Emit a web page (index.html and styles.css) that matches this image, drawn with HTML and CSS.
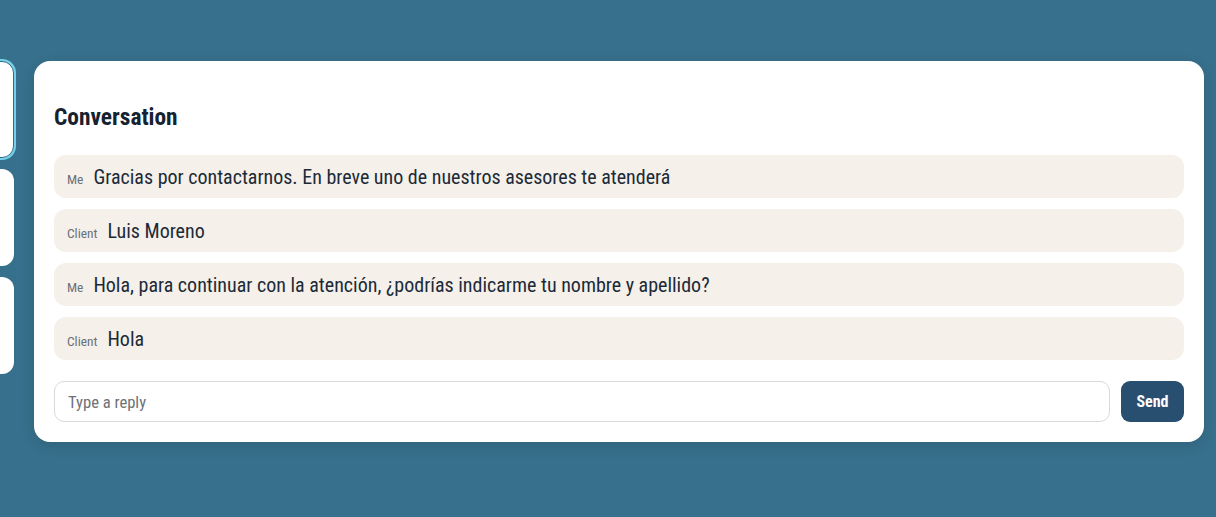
FILE: index.html
```html
<!DOCTYPE html>
<html lang="es">
<head>
<meta charset="utf-8">
<title>Conversation</title>
<link rel="stylesheet" href="styles.css">
</head>
<body>
<div class="layout">
  <aside class="sidebar">
    <div class="side-card active"></div>
    <div class="side-card"></div>
    <div class="side-card"></div>
  </aside>
  <main class="panel">
    <h2 class="title">Conversation</h2>
    <ul class="messages">
      <li class="msg"><span class="who">Me</span><span class="text">Gracias por contactarnos. En breve uno de nuestros asesores te atenderá</span></li>
      <li class="msg"><span class="who">Client</span><span class="text">Luis Moreno</span></li>
      <li class="msg"><span class="who">Me</span><span class="text">Hola, para continuar con la atención, ¿podrías indicarme tu nombre y apellido?</span></li>
      <li class="msg"><span class="who">Client</span><span class="text">Hola</span></li>
    </ul>
    <form class="reply">
      <input class="reply-input" type="text" placeholder="Type a reply">
      <button class="send" type="button">Send</button>
    </form>
  </main>
</div>
</body>
</html>
```
FILE: styles.css
```css
* { box-sizing: border-box; }
html, body { margin: 0; padding: 0; }
body {
  background: #37708c;
  font-family: "Roboto Condensed", "Roboto", "Liberation Sans", sans-serif;
  font-stretch: condensed;
  color: #1b2733;
  width: 1216px;
  height: 517px;
  overflow: hidden;
}
.layout {
  display: flex;
  align-items: flex-start;
  gap: 20px;
  padding: 61px 12px 0 0;
}
.sidebar {
  flex: 0 0 300px;
  margin-left: -286px;
  display: flex;
  flex-direction: column;
  gap: 11px;
}
.side-card {
  height: 97px;
  background: #fff;
  border-radius: 12px;
}
.side-card.active {
  border: 1px solid #2f6a86;
  box-shadow: 0 0 0 2px #74d2e8;
}
.panel {
  flex: 1;
  background: #fff;
  border-radius: 16px;
  padding: 20px;
  box-shadow: 0 4px 14px rgba(0, 0, 0, 0.12);
}
.title {
  margin: 23px 0 24px;
  font-size: 23.4px;
  font-weight: 700;
  color: #152230;
  line-height: 27px;
}
.messages {
  list-style: none;
  margin: 0 0 21px;
  padding: 0;
  display: flex;
  flex-direction: column;
  gap: 11px;
}
.msg {
  display: flex;
  align-items: baseline;
  gap: 10px;
  background: #f5f0ea;
  border-radius: 12px;
  padding: 11px 13px 9px;
  height: 43px;
}
.who {
  font-size: 13.4px;
  color: #6a7078;
}
.text {
  font-size: 20px;
  color: #1c2a38;
  line-height: 23px;
}
.reply {
  display: flex;
  gap: 11px;
  margin: 0;
}
.reply-input {
  flex: 1;
  height: 41px;
  border: 1px solid #d9d9d9;
  border-radius: 10px;
  padding: 1px 13px 0;
  font-family: inherit;
  font-stretch: condensed;
  font-size: 16.6px;
  color: #1c2a38;
  outline: none;
}
.reply-input::placeholder { color: #6d7178; }
.send {
  width: 63px;
  height: 41px;
  border: none;
  border-radius: 9px;
  background: #284f6f;
  color: #fff;
  font-family: inherit;
  font-stretch: condensed;
  font-size: 16px;
  font-weight: 700;
  padding: 0;
}
```
